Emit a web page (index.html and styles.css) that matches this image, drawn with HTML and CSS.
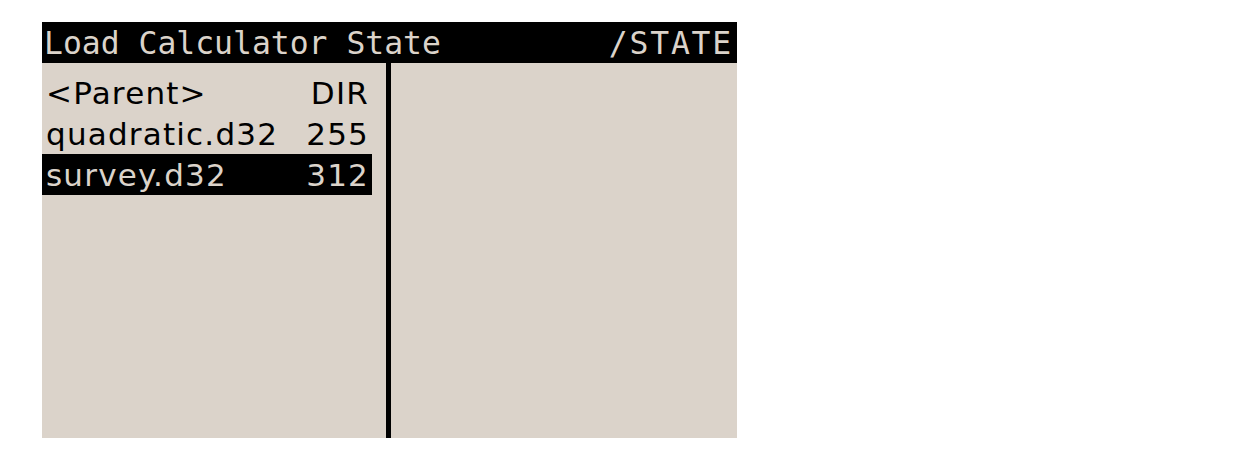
FILE: index.html
```html
<!DOCTYPE html>
<html lang="en">
<head>
  <meta charset="UTF-8">
  <title>Load Calculator State</title>
  <link rel="stylesheet" href="styles.css">
</head>
<body>
  <div class="screen">
    <div class="header">
      <span class="title">Load Calculator State</span>
      <span class="path">/STATE</span>
    </div>

    <div class="main">
      <div class="files">
        <div class="row"><span class="name">&lt;Parent&gt;</span><span class="size">DIR</span></div>
        <div class="row"><span class="name">quadratic.d32</span><span class="size">255</span></div>
        <div class="row selected"><span class="name">survey.d32</span><span class="size">312</span></div>
      </div>
      <div class="divider"></div>
      <div class="preview"></div>
    </div>
  </div>
</body>
</html>
```

FILE: styles.css
```css
body {
  margin: 0;
  padding: 22px 0 0 42px;
  background: #fff;
}

.screen {
  width: 695px;
  height: 416px;
  background: #dbd3ca;
  display: flex;
  flex-direction: column;
}

.header {
  height: 41px;
  background: #000;
  color: #dbd3ca;
  display: flex;
  justify-content: space-between;
  padding: 0 4px 0 2px;
  font-family: 'DejaVu Sans Mono', monospace;
  font-size: 31.4px;
  line-height: 43px;
}

.header .path {
  letter-spacing: 1.8px;
}

.main {
  flex: 1;
  display: flex;
}

.files {
  width: 330px;
  margin-right: 14px;
  padding-top: 9px;
  font-family: 'DejaVu Sans', sans-serif;
  font-size: 31px;
  letter-spacing: 1.2px;
  color: #000;
}

.row {
  display: flex;
  justify-content: space-between;
  height: 41px;
  line-height: 42px;
  padding: 0 3px 0 4px;
}

.row.selected {
  background: #000;
  color: #dbd3ca;
}

.divider {
  width: 5px;
  background: #000;
}

.preview {
  flex: 1;
}
```
